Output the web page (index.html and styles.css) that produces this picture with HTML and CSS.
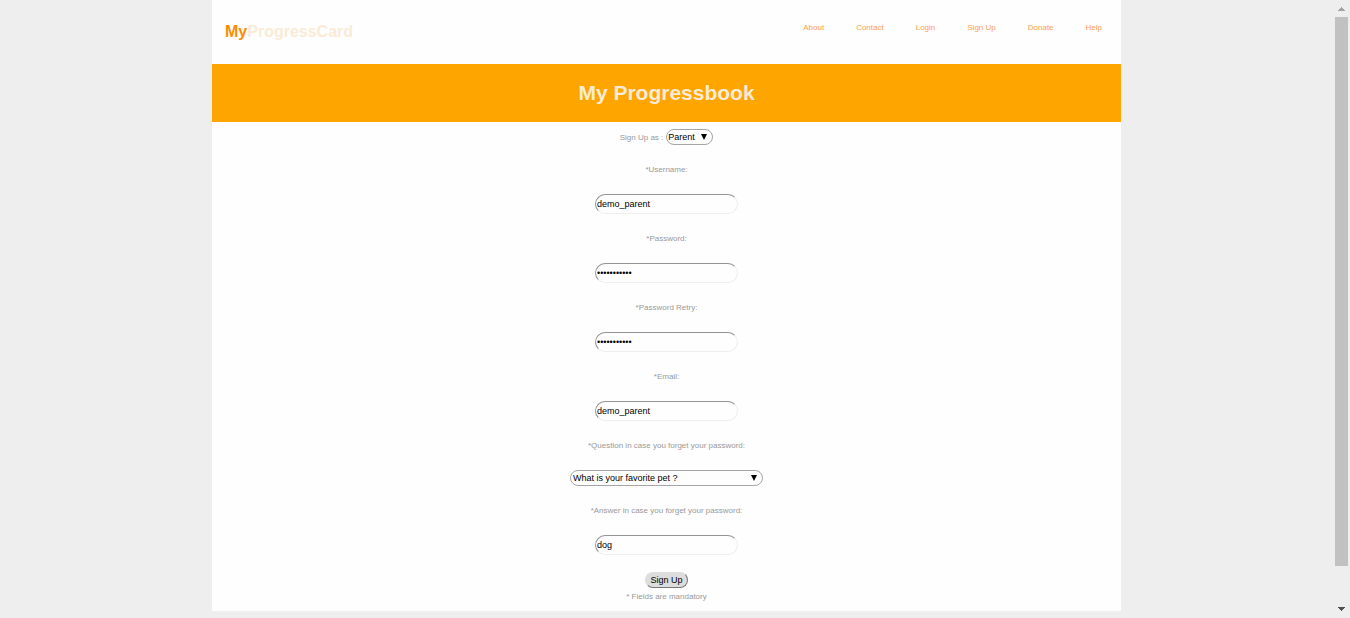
FILE: index.html
```html
<!DOCTYPE html>
<html lang="en">
<head>
<meta charset="utf-8">
<title>My Progressbook</title>
<link rel="stylesheet" href="styles.css">
</head>
<body>
<div class="viewport">
  <div class="page">
    <header class="header">
      <a class="logo" href="#"><span class="logo-accent">My</span>ProgressCard</a>
      <nav class="nav">
        <a href="#">About</a>
        <a href="#">Contact</a>
        <a href="#">Login</a>
        <a href="#">Sign Up</a>
        <a href="#">Donate</a>
        <a href="#">Help</a>
      </nav>
    </header>
    <h1 class="banner">My Progressbook</h1>
    <form class="form">
      <div class="role">
        <label for="role">Sign Up as :</label>
        <div class="select">
          <select id="role" class="control select-short"><option>Parent</option><option>Teacher</option></select>
          <svg class="arrow" viewBox="0 0 6 6" aria-hidden="true"><path d="M0 0h6L3 6z"/></svg>
        </div>
      </div>
      <label for="username">*Username:</label>
      <input id="username" class="control field" type="text" value="demo_parent">
      <label for="password">*Password:</label>
      <input id="password" class="control field" type="password" value="demo_parent">
      <label for="retry">*Password Retry:</label>
      <input id="retry" class="control field" type="password" value="demo_parent">
      <label for="email">*Email:</label>
      <input id="email" class="control field" type="text" value="demo_parent">
      <label for="question">*Question in case you forget your password:</label>
      <div class="select">
        <select id="question" class="control select-long"><option>What is your favorite pet ?</option></select>
        <svg class="arrow" viewBox="0 0 6 6" aria-hidden="true"><path d="M0 0h6L3 6z"/></svg>
      </div>
      <label for="answer">*Answer in case you forget your password:</label>
      <input id="answer" class="control field" type="text" value="dog">
      <div class="submit">
        <button class="button" type="button">Sign Up</button>
        <p class="note">* Fields are mandatory</p>
      </div>
    </form>
  </div>
  <div class="scrollbar" aria-hidden="true">
    <svg class="scroll-arrow" viewBox="0 0 7 4"><path fill="#a3a3a3" d="M3 0h1v1h1v1h1v1h1v1H0V3h1V2h1V1h1z"/></svg>
    <div class="track"><div class="thumb"></div></div>
    <svg class="scroll-arrow" viewBox="0 0 7 4"><path fill="#505050" d="M0 0h7v1H6v1H5v1H4v1H3V3H2V2H1V1H0z"/></svg>
  </div>
</div>
</body>
</html>
```
FILE: styles.css
```css
* {
  box-sizing: border-box;
}

body {
  margin: 0;
  background: #eee;
  color: #999;
  font: 8px/9px "Liberation Sans", Arial, sans-serif;
}

.viewport {
  display: grid;
  grid-template-columns: 1fr 17px;
  height: 100vh;
  overflow: hidden;
}

.page {
  align-self: start;
  justify-self: center;
  width: 100%;
  max-width: 909px;
  background: #fefefe;
}

.header {
  display: flex;
  justify-content: space-between;
  align-items: flex-start;
  padding: 23px 19px 23px 13px;
}

.logo {
  color: #faebd7;
  font-size: 16px;
  font-weight: bold;
  line-height: 18px;
  text-decoration: none;
}

.logo-accent {
  color: #ff8c00;
}

.nav {
  display: flex;
  gap: 32px;
}

.nav a {
  color: #ffa04d;
  text-decoration: none;
}

.banner {
  margin: 0;
  padding: 17px;
  background: #ffa500;
  color: #faebd7;
  font-size: 21px;
  line-height: 24px;
  text-align: center;
}

.form {
  display: flex;
  flex-direction: column;
  align-items: center;
  gap: 20px;
  padding: 7px 0 10px;
}

.role {
  display: flex;
  align-items: center;
  gap: 3px;
}

.select {
  position: relative;
  display: flex;
}

.control {
  appearance: none;
  margin: 0;
  border: 1px solid #a6a6a6;
  border-radius: 10px;
  background: transparent;
  color: #000;
  font: 9px/12px "Liberation Sans", Arial, sans-serif;
}

.select-short {
  width: 47px;
  height: 16px;
  padding: 0 0 0 1px;
}

.select-long {
  width: 193px;
  height: 16px;
  padding: 0 0 0 2px;
}

.arrow {
  position: absolute;
  top: 5px;
  right: 6px;
  width: 6px;
  height: 6px;
  pointer-events: none;
}

.field {
  width: 143px;
  height: 20px;
  padding: 1px;
  border-color: #949494 #eee #eee #949494;
}

.submit {
  display: flex;
  flex-direction: column;
  align-items: center;
  gap: 4px;
  margin-top: -3px;
}

.button {
  height: 16px;
  padding: 0 4px;
  border: 1px solid;
  border-color: #ddd #777 #777 #ddd;
  border-radius: 10px;
  background: #ddd;
  color: #000;
  font: 9px/12px "Liberation Sans", Arial, sans-serif;
}

.note {
  margin: 0;
}

.scrollbar {
  display: flex;
  flex-direction: column;
  align-items: center;
  gap: 6px;
  padding: 7px 0;
}

.scroll-arrow {
  width: 7px;
  height: 4px;
}

.track {
  flex: 1;
  width: 13px;
}

.thumb {
  height: 94%;
  background: #c1c1c1;
}
```
